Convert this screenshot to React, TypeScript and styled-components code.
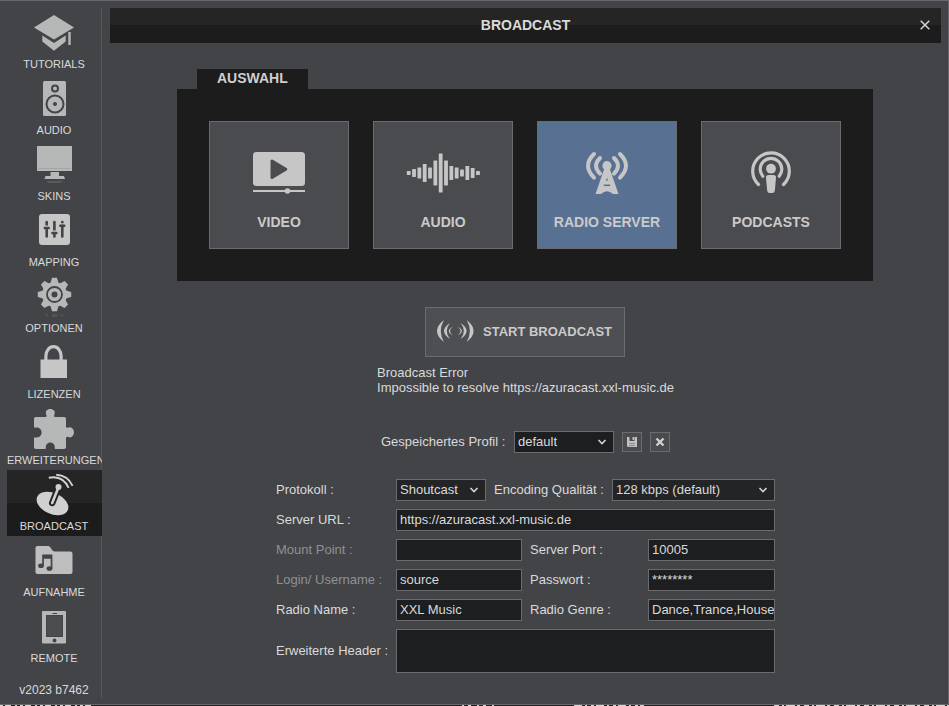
import React, { useState } from "react";
import styled, { createGlobalStyle, css } from "styled-components";

const color = {
  window: "#434448",
  edge: "#68686c",
  dark: "#1c1c1c",
  darkTop: "#252526",
  field: "#1d1e20",
  select: "#222426",
  line: "#6b6b6f",
  text: "#dadada",
  muted: "#909093",
  icon: "#b6b8b8",
  iconLight: "#c6c6c6",
  active: "#587192",
};

const GlobalStyle = createGlobalStyle`
  *, *::before, *::after { box-sizing: border-box; }
  body {
    margin: 0;
    background: #1f1f21;
    color: ${color.text};
    font-family: "Liberation Sans", Arial, sans-serif;
    font-size: 13px;
    line-height: 15px;
  }
  button, input, select, textarea { font: inherit; color: inherit; margin: 0; border-radius: 0; }
  svg { display: block; flex: none; }
`;

const Page = styled.div`
  min-height: 100vh;
  display: flex;
  flex-direction: column;
`;

const Window = styled.div`
  flex: 1;
  display: flex;
  background: ${color.window};
  border: 1px solid ${color.edge};
  border-left: 0;
`;

const Backdrop = styled.svg`
  width: 100%;
  height: 1px;
`;

const Sidebar = styled.nav`
  width: 102px;
  flex: none;
  margin: 7px 0 6px;
  padding-left: 7px;
  display: flex;
  flex-direction: column;
  border-right: 1px solid #55565a;
`;

const NavItem = styled.button<{ $active?: boolean }>`
  height: 66px;
  width: 95px;
  flex: none;
  padding: 0;
  border: 0;
  overflow: hidden;
  display: flex;
  flex-direction: column;
  align-items: center;
  background: ${(p) =>
    p.$active
      ? `linear-gradient(${color.darkTop} 50%, ${color.dark} 50%)`
      : "transparent"};
`;

const NavLabel = styled.span`
  align-self: flex-start;
  width: 94px;
  font-size: 11px;
  line-height: 16px;
  white-space: nowrap;
  text-align: center;
`;

const Version = styled.div`
  margin-top: 14px;
  font-size: 12px;
  line-height: 16px;
  text-align: center;
`;

const Main = styled.main`
  flex: 1;
  min-width: 0;
  padding: 7px 7px 30px 8px;
`;

const Header = styled.header`
  height: 35px;
  display: grid;
  grid-template-columns: 32px 1fr 32px;
  align-items: center;
  background: linear-gradient(${color.darkTop} 17px, ${color.dark} 17px);
`;

const Title = styled.h1`
  grid-column: 2;
  margin: 0;
  padding-bottom: 2px;
  font-size: 14px;
  line-height: 16px;
  font-weight: bold;
  text-align: center;
`;

const CloseButton = styled.button`
  height: 32px;
  padding: 0 0 2px;
  border: 0;
  background: none;
  display: grid;
  place-items: center;
`;

const Chooser = styled.section`
  margin-top: 26px;
  padding-right: 1px;
  display: flex;
  flex-direction: column;
  align-items: center;
`;

const TabPanel = styled.div`
  display: flex;
  flex-direction: column;
  align-items: flex-start;
`;

const Tab = styled.h2`
  margin: 0 0 0 20px;
  height: 20px;
  padding: 0 20px;
  font-size: 14px;
  line-height: 18px;
  background: ${color.dark};
  color: #cfcfcf;
`;

const Cards = styled.div`
  display: flex;
  gap: 24px;
  padding: 32px;
  background: ${color.dark};
`;

const Card = styled.button<{ $active?: boolean }>`
  width: 140px;
  height: 128px;
  padding: 23px 0 0;
  display: flex;
  flex-direction: column;
  align-items: center;
  gap: 17px;
  border: 1px solid ${color.line};
  background: ${(p) => (p.$active ? color.active : "#4a4b4e")};
  color: #cacaca;
  font-size: 14px;
  line-height: 16px;
  font-weight: bold;
`;

const StartButton = styled.button`
  margin-top: 26px;
  width: 200px;
  height: 50px;
  padding: 0 10px 2px;
  display: flex;
  align-items: center;
  gap: 9px;
  border: 1px solid ${color.line};
  background: #4e4f52;
  color: #cacaca;
  font-weight: bold;
  white-space: nowrap;
`;

const Details = styled.section`
  display: flex;
  flex-direction: column;
  align-items: center;
`;

const ErrorText = styled.p`
  margin: 8px 0 36px;
  white-space: pre-line;
`;

const ProfileRow = styled.div`
  display: flex;
  align-items: center;
  gap: 8px;
  margin-bottom: 26px;
`;

const Group = styled.div`
  display: flex;
  align-items: center;
`;

const IconButton = styled.button`
  width: 20px;
  height: 20px;
  padding: 0;
  display: grid;
  place-items: center;
  border: 1px solid ${color.line};
  background: #4a4b4e;
`;

const Form = styled.form`
  width: 499px;
  display: flex;
  flex-direction: column;
  gap: 8px;
`;

const Row = styled.div`
  display: flex;
  align-items: center;
  gap: 8px;
`;

const Field = styled.div<{ $grow?: boolean }>`
  display: flex;
  align-items: center;
  ${(p) => p.$grow && "flex: 1; min-width: 0;"}
`;

const Label = styled.label<{ $width: number; $muted?: boolean }>`
  flex: none;
  width: ${(p) => p.$width}px;
  padding-bottom: 1px;
  white-space: nowrap;
  color: ${(p) => (p.$muted ? color.muted : color.text)};
`;

const box = css`
  min-width: 0;
  border: 1px solid ${color.line};
  background: ${color.field};
  outline: 0;
`;

const TextInput = styled.input<{ $width?: number }>`
  ${box}
  height: 22px;
  padding: 0 0 1px 3px;
  ${(p) => (p.$width ? `width: ${p.$width}px;` : "flex: 1;")}
`;

const TextArea = styled.textarea`
  ${box}
  display: block;
  flex: 1;
  height: 44px;
  padding: 3px;
  resize: none;
`;

const SelectBox = styled.div<{ $width?: number; $dark?: boolean }>`
  ${box}
  height: 22px;
  display: grid;
  align-items: center;
  background: ${(p) => (p.$dark ? color.field : color.select)};
  ${(p) => (p.$width ? `width: ${p.$width}px;` : "flex: 1;")}

  select {
    grid-area: 1 / 1;
    width: 100%;
    height: 20px;
    padding: 0 20px 1px 3px;
    appearance: none;
    border: 0;
    background: transparent;
    outline: 0;
  }
  svg {
    grid-area: 1 / 1;
    justify-self: end;
    margin-right: 6px;
    pointer-events: none;
  }
`;

function Select(props: { id: string; options: string[]; width?: number; dark?: boolean }) {
  return (
    <SelectBox $width={props.width} $dark={props.dark}>
      <select id={props.id}>
        {props.options.map((o) => (
          <option key={o}>{o}</option>
        ))}
      </select>
      <svg width="10" height="8" viewBox="0 0 10 8" aria-hidden="true">
        <path d="M1.5 2 5 5.5 8.5 2" fill="none" stroke="#d4d4d4" strokeWidth="1.6" />
      </svg>
    </SelectBox>
  );
}

const gear = Array.from({ length: 8 }, (_, i) => i * 45);

const navIcons: Record<string, React.ReactNode> = {
  TUTORIALS: (
    <g>
      <path d="M10 19.5 30 7l20 12.5-20 12z" />
      <path d="M18.3 27.5 30 35l11.7-7.5v6L30 42.8l-11.7-9.3z" />
      <path d="M44.3 24h2.4v13h-2.4z" />
    </g>
  ),
  AUDIO: (
    <g>
      <rect x="19" y="7" width="23" height="35" rx="1.5" />
      <g fill="none" stroke={color.window} strokeWidth="2">
        <circle cx="31" cy="14.5" r="3" />
        <circle cx="31" cy="30" r="8.5" />
      </g>
      <circle cx="31" cy="30" r="2" fill={color.window} />
    </g>
  ),
  SKINS: (
    <g>
      <rect x="13" y="6" width="35" height="25" />
      <path d="M14 28.5h33" stroke="#a3a5a5" />
      <path d="M26.5 32H35v4h5l1 3H20.5l1-3h5z" />
      <path d="M22 41h17l-3 2H25z" opacity=".2" />
    </g>
  ),
  MAPPING: (
    <g>
      <rect x="15" y="8" width="31" height="31" rx="3" fill={color.iconLight} />
      <g stroke={color.window} strokeWidth="2.6" strokeLinecap="round">
        <path d="M22.7 16v14.5M30.4 16v14.5M38.3 16v14.5" />
        <path
          d="M19.5 20.3H26M27.2 25.3h6.5M35 18h6.5"
          stroke={color.iconLight}
          strokeWidth="1.5"
          strokeLinecap="butt"
        />
        <path d="M20.7 22h4M28.4 27h4M36.3 19.7h4" strokeWidth="2.4" />
      </g>
    </g>
  ),
  OPTIONEN: (
    <g>
      <circle cx="30.5" cy="22.5" r="12.5" />
      {gear.map((a) => (
        <path key={a} d="M26.3 12 28 5.8h5l1.7 6.2z" transform={`rotate(${a} 30.5 22.5)`} />
      ))}
      <circle cx="30.5" cy="22.5" r="7.5" fill="none" stroke={color.window} strokeWidth="1.8" />
      <circle cx="30.5" cy="22.5" r="3" fill={color.window} />
      <path d="M20 43l3-1 2 3zM28 42h5v3h-5zM36 42l5 1-4 2z" opacity=".15" />
    </g>
  ),
  LIZENZEN: (
    <g fill={color.iconLight}>
      <rect x="16.5" y="21.5" width="26.5" height="18.5" />
      <path
        d="M21.9 22.5V18a7.6 9.3 0 0 1 15.2 0v4.5"
        fill="none"
        stroke={color.iconLight}
        strokeWidth="3.2"
      />
    </g>
  ),
  ERWEITERUNGEN: (
    <path d="M12 13h9c1.7 0 1.8-1.3 1.2-2.6C20.800 7.3 23.3 5 26.3 5s5.500 2.300 4.100 5.400c-.6 1.300-.5 2.600 1.200 2.600H40c1.500 0 2 .7 2 2v7c0 1.800 1.200 2.300 2.500 1.500C47.500 22 50 25.500 50 28.300s-2.500 6.200-5.500 4.800c-1.300-.7-2.500-.1-2.500 1.600V43c0 1.300-.7 2-2 2h-8.300c-.7 0-1-.4-.9-1.200.2-3-1.600-5.300-4.500-5.300s-4.700 2.300-4.500 5.300c0 .8-.2 1.200-.9 1.200H12c-1.300 0-2-.7-2-2v-8.500c0-.9.5-1.300 1.300-1.100 3.500.8 6.300-1.400 6.300-4.800s-2.800-5.700-6.300-4.900c-.8.200-1.300-.2-1.300-1.100V15c0-1.300.7-2 2-2z" />
  ),
  BROADCAST: (
    <g>
      <ellipse cx="28.5" cy="33.5" rx="16.7" ry="10.5" transform="rotate(24 28.5 33.5)" fill="#d0d0d0" />
      <path d="m28.2 33 6-15" stroke={color.darkTop} strokeWidth="6.5" strokeLinecap="round" />
      <path d="m28.2 33 6-15" stroke="#d0d0d0" strokeWidth="2.6" strokeLinecap="round" />
      <circle cx="34.5" cy="17" r="3" fill="#d0d0d0" />
      <g fill="none" stroke="#d4d4d4" strokeWidth="1.9">
        <path d="M24.8 7.8Q38.5 4.8 44.6 17.8" />
        <path d="M32.3 4.8Q43.5 5.3 48.6 15.8" />
      </g>
    </g>
  ),
  AUFNAHME: (
    <g>
      <path
        d="M13.5 10H24c3 0 3.500 5.500 7 5.500h15.500q2 0 2 2V36q0 2-2 2h-33q-2 0-2-2V12q0-2 2-2z"
        fill="#bebebe"
      />
      <g fill={color.window}>
        <path d="M18.2 18.5h10.2v13.8h-1.700v-9.600h-6.800v7h-1.700z" />
        <ellipse cx="17" cy="29.8" rx="2.9" ry="2.3" />
        <ellipse cx="25.5" cy="32.5" rx="2.9" ry="2.3" />
      </g>
    </g>
  ),
  REMOTE: (
    <g>
      <rect x="18" y="9" width="24" height="32.5" rx="1" />
      <rect x="22.5" y="13.5" width="16" height="21" fill="#4c4d50" stroke={color.window} />
      <circle cx="30.5" cy="38.5" r="1.9" fill={color.window} />
      <path d="M28.5 11.5H33" stroke={color.window} />
    </g>
  ),
};

const bars = [4, 8, 11, 18, 11, 25, 39, 25, 14, 11, 7, 14, 10, 4];

const cardIcons: Record<string, React.ReactNode> = {
  VIDEO: (
    <g>
      <rect x="14" y="7" width="52" height="34" rx="3.5" />
      <path
        d="M33 16v16.500l13.800-8.300z"
        fill="#4a4b4e"
        stroke="#4a4b4e"
        strokeWidth="3"
        strokeLinejoin="round"
      />
      <path d="M14 46h52" stroke={color.iconLight} strokeWidth="2" />
      <circle cx="48.5" cy="46" r="2.8" />
    </g>
  ),
  AUDIO: (
    <g>
      {bars.map((h, i) => (
        <rect key={i} x={3.8 + i * 5.33} y={28 - h / 2} width="3.8" height={h} rx=".4" />
      ))}
    </g>
  ),
  "RADIO SERVER": (
    <g>
      <circle cx="40" cy="20.7" r="4.6" />
      <path d="M37.5 23h5l9 26H46q-6-5.500-12 0h-5.500z" />
      <path d="M40 33l1.200 2.500h-2.400z" fill={color.active} />
      <path d="M36.8 40.3h6.4" stroke={color.active} strokeWidth="1.5" />
      <g fill="none" stroke={color.iconLight} strokeWidth="4" strokeLinecap="round">
        <path d="M27 9q-12 11.800 0 23.600M53 9q12 11.800 0 23.600" />
        <path d="M33 13q-8 7.800 0 15.600M47 13q8 7.800 0 15.600" />
      </g>
    </g>
  ),
  PODCASTS: (
    <g>
      <circle cx="40" cy="23.7" r="4.9" />
      <path d="M37.5 30h5q2.700 0 2.500 2.700L43.900 45q-.3 3-2.500 3h-2.800q-2.200 0-2.500-3L35 32.700q-.2-2.700 2.500-2.700z" />
      <g fill="none" stroke={color.iconLight} strokeWidth="3.2" strokeLinecap="round">
        <path d="M31.8 31.3A10.8 10.8 0 1 1 48.2 31.3" />
        <path d="M27.5 39.5A18.3 18.3 0 1 1 52.5 39.5" />
      </g>
    </g>
  ),
};

const crescents =
  "M8 1Q-6 12 8 23Q1.500 12 8 1zM14 4Q2 12 14 20Q7.500 12 14 4zM17 7.700Q8.500 12 17 16.500Q11 12 17 7.700z";

export default function App() {
  const [section, setSection] = useState("BROADCAST");
  const [source, setSource] = useState("RADIO SERVER");

  return (
    <Page>
      <GlobalStyle />
      <Window>
        <Sidebar>
          {Object.keys(navIcons).map((name) => (
            <NavItem key={name} $active={name === section} onClick={() => setSection(name)}>
              <svg width="61" height="48" viewBox="0 0 61 48" fill={color.icon} aria-hidden="true">
                {navIcons[name]}
              </svg>
              <NavLabel>{name}</NavLabel>
            </NavItem>
          ))}
          <Version>v2023 b7462</Version>
        </Sidebar>

        <Main>
          <Header>
            <Title>BROADCAST</Title>
            <CloseButton aria-label="Close">
              <svg width="10" height="10" viewBox="0 0 10 10">
                <path d="m.7.7 8.600 8.600m0-8.600L.7 9.300" stroke="#d0d0d0" strokeWidth="1.6" />
              </svg>
            </CloseButton>
          </Header>

          <Chooser>
            <TabPanel>
              <Tab>AUSWAHL</Tab>
              <Cards>
                {Object.keys(cardIcons).map((name) => (
                  <Card
                    key={name}
                    $active={name === source}
                    aria-pressed={name === source}
                    onClick={() => setSource(name)}
                  >
                    <svg width="80" height="52" viewBox="0 0 80 52" fill={color.iconLight} aria-hidden="true">
                      {cardIcons[name]}
                    </svg>
                    {name}
                  </Card>
                ))}
              </Cards>
            </TabPanel>
            <StartButton>
              <svg width="38" height="24" viewBox="0 0 38 24" fill="#c6c6c6" aria-hidden="true">
                <path d={crescents} />
                <path d={crescents} transform="matrix(-1 0 0 1 38.6 0)" />
              </svg>
              START BROADCAST
            </StartButton>
          </Chooser>

          <Details>
            <ErrorText role="alert">
              {"Broadcast Error\nImpossible to resolve https://azuracast.xxl-music.de"}
            </ErrorText>

            <ProfileRow>
              <Group>
                <Label htmlFor="profile" $width={133}>Gespeichertes Profil :</Label>
                <Select id="profile" options={["default"]} width={100} dark />
              </Group>
              <IconButton aria-label="Save">
                <svg width="12" height="12" viewBox="0 0 12 12">
                  <path d="M1 1h10v10H2l-1-1z" fill="#c2c2c2" />
                  <path d="M3.5 1h5v4h-5z" fill="#4a4b4e" />
                  <path d="M6.5 1H8v3H6.5z" fill="#c2c2c2" />
                  <path d="M3 7.5h6M3 9.5h6" stroke="#8a8a8c" />
                </svg>
              </IconButton>
              <IconButton aria-label="Delete">
                <svg width="10" height="10" viewBox="0 0 10 10">
                  <path d="m1.5 1.5 7 7m0-7-7 7" stroke="#d0d0d0" strokeWidth="2.4" />
                </svg>
              </IconButton>
            </ProfileRow>

            <Form onSubmit={(e) => e.preventDefault()}>
              <Row>
                <Field>
                  <Label htmlFor="protocol" $width={120}>Protokoll :</Label>
                  <Select id="protocol" options={["Shoutcast"]} width={90} />
                </Field>
                <Field $grow>
                  <Label htmlFor="quality" $width={118}>Encoding Qualität :</Label>
                  <Select id="quality" options={["128 kbps (default)"]} />
                </Field>
              </Row>
              <Row>
                <Field $grow>
                  <Label htmlFor="url" $width={120}>Server URL :</Label>
                  <TextInput id="url" defaultValue="https://azuracast.xxl-music.de" />
                </Field>
              </Row>
              <Row>
                <Field>
                  <Label htmlFor="mount" $width={120} $muted>Mount Point :</Label>
                  <TextInput id="mount" $width={126} />
                </Field>
                <Field $grow>
                  <Label htmlFor="port" $width={118}>Server Port :</Label>
                  <TextInput id="port" defaultValue="10005" />
                </Field>
              </Row>
              <Row>
                <Field>
                  <Label htmlFor="login" $width={120} $muted>Login/ Username :</Label>
                  <TextInput id="login" $width={126} defaultValue="source" />
                </Field>
                <Field $grow>
                  <Label htmlFor="password" $width={118}>Passwort :</Label>
                  <TextInput id="password" autoComplete="off" defaultValue="********" />
                </Field>
              </Row>
              <Row>
                <Field>
                  <Label htmlFor="name" $width={120}>Radio Name :</Label>
                  <TextInput id="name" $width={126} defaultValue="XXL Music" />
                </Field>
                <Field $grow>
                  <Label htmlFor="genre" $width={118}>Radio Genre :</Label>
                  <TextInput id="genre" defaultValue="Dance,Trance,House" />
                </Field>
              </Row>
              <Row>
                <Field $grow>
                  <Label htmlFor="headers" $width={120}>Erweiterte Header :</Label>
                  <TextArea id="headers" />
                </Field>
              </Row>
            </Form>
          </Details>
        </Main>
      </Window>
      <Backdrop aria-hidden="true">
        <g stroke="#d8d8d8" strokeWidth="2">
          <path d="M0 0h95" strokeDasharray="3 2 6 4 2 3" />
          <path d="M462 0h36" strokeDasharray="2 4 3 6" />
          <path d="M574 0h70" strokeDasharray="8 3 2 4 3 2" />
          <path d="M774 0h175" strokeDasharray="5 3 2 2 9 2 3 4" />
        </g>
      </Backdrop>
    </Page>
  );
}
